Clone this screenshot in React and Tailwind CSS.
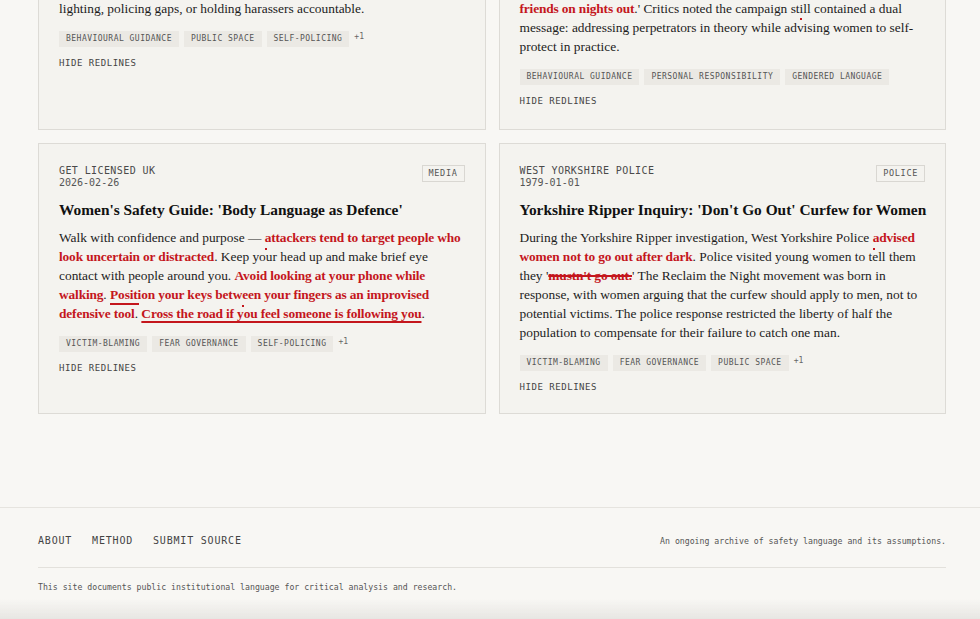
import React from "react";

const R = ({ children, className = "" }) => (
  <span className={`font-bold tracking-[-0.15px] text-[#c4161c] ${className}`}>{children}</span>
);

const Mark = ({ top = "top-[6px]" }) => (
  <span className="relative inline-block w-0 h-0">
    <span className={`absolute left-0 ${top} w-[2px] h-[2px] bg-[#c4161c]`} />
  </span>
);

const Tag = ({ children }) => (
  <span className="flex h-4 items-center bg-[#ebe9e4] px-[7px] text-[8px] tracking-[0.06em] text-[#555] uppercase">
    {children}
  </span>
);

const Tags = ({ items, more }) => (
  <div className="mt-[13px] flex items-start gap-[5px] font-['DejaVu_Sans_Mono',monospace]">
    {items.map((t) => (
      <Tag key={t}>{t}</Tag>
    ))}
    {more && <span className="text-[8px] leading-[12px] text-[#666]">{more}</span>}
  </div>
);

const Hide = () => (
  <button className="mt-[10px] block text-left font-['DejaVu_Sans_Mono',monospace] text-[9px] leading-[12px] tracking-[0.06em] text-[#444]">
    HIDE REDLINES
  </button>
);

const Body = ({ children }) => (
  <p className="whitespace-nowrap font-['Liberation_Serif',serif] text-[13.4px] leading-[19px] text-[#1c1c1c]">
    {children}
  </p>
);

const Card = ({ source, date, badge, title, children, tags, more }) => (
  <article className="flex flex-col border border-[#dddbd6] bg-[#f4f3ef] px-5 pb-5 pt-[21px]">
    <div className="flex items-start justify-between">
      <div className="font-['DejaVu_Sans_Mono',monospace] text-[10px] leading-[12px]">
        <div className="tracking-[0.04em] text-[#4a4a4a]">{source}</div>
        <div className="text-[#555]">{date}</div>
      </div>
      <span className="flex h-[17px] items-center border border-[#d9d7d2] px-[6px] font-['DejaVu_Sans_Mono',monospace] text-[8.5px] tracking-[0.08em] text-[#555]">
        {badge}
      </span>
    </div>
    <h2 className="mt-[11px] whitespace-nowrap font-['Liberation_Serif',serif] text-[15.4px] font-bold leading-[20px] text-[#111]">
      {title}
    </h2>
    <div className="mt-[8px]">
      <Body>{children}</Body>
    </div>
    <Tags items={tags} more={more} />
    <Hide />
  </article>
);

const TopCard = ({ children, tags, more }) => (
  <article className="flex flex-col border-x border-b border-[#dddbd6] bg-[#f4f3ef] px-5 pb-[22px]">
    <Body>{children}</Body>
    <Tags items={tags} more={more} />
    <Hide />
  </article>
);

export default function App() {
  return (
    <div className="relative min-h-[619px] bg-[#f8f7f4] text-[#1c1c1c]">
      <main className="pl-[38px] pr-[34px]">
        <div className="-mt-[1px] grid grid-cols-2 gap-x-[13px] gap-y-[13px]">
          <TopCard tags={["Behavioural guidance", "Public space", "Self-policing"]} more="+1">
            lighting, policing gaps, or holding harassers accountable.
          </TopCard>
          <TopCard tags={["Behavioural guidance", "Personal responsibility", "Gendered language"]}>
            <R>friends on nights out</R>.' Critics noted the campaign st
            <Mark top="top-[5px]" />
            ill contained a dual
            <br />
            message: addressing perpetrators in theory while advising women to self-
            <br />
            protect in practice.
          </TopCard>

          <Card
            source="GET LICENSED UK"
            date="2026-02-26"
            badge="MEDIA"
            title="Women's Safety Guide: 'Body Language as Defence'"
            tags={["Victim-blaming", "Fear governance", "Self-policing"]}
            more="+1"
          >
            Walk with confidence and purpose — <Mark />
            <R>attackers tend to target people who</R>
            <br />
            <R>look uncertain or distracted</R>. Keep your head up and make brief eye
            <br />
            contact with people around you. <R>Avoid looking at your phone while</R>
            <br />
            <R>walking</R>.{" "}
            <R>
              <span className="relative">
                Position
                <span className="absolute left-0 top-[16px] h-[2px] w-[29px] bg-[#c4161c]" />
              </span>{" "}
              your keys betw
              <Mark />
              een your fingers as an improvised
            </R>
            <br />
            <R>defensive tool</R>.{" "}
            <R className="underline decoration-2 underline-offset-[3px]">
              Cross the road if you feel someone is following you
            </R>
            .
          </Card>

          <Card
            source="WEST YORKSHIRE POLICE"
            date="1979-01-01"
            badge="POLICE"
            title="Yorkshire Ripper Inquiry: 'Don't Go Out' Curfew for Women"
            tags={["Victim-blaming", "Fear governance", "Public space"]}
            more="+1"
          >
            During the Yorkshire Ripper investigation, West Yorkshire Police <Mark />
            <R>advised</R>
            <br />
            <R>women not to go out after dark</R>. Police visited young women to tell them
            <br />
            they '<R className="line-through decoration-[1.5px]">mustn't go out.</R>' The Reclaim the
            Night movement was born in
            <br />
            response, with women arguing that the curfew should apply to men, not to
            <br />
            potential victims. The police response restricted the liberty of half the
            <br />
            population to compensate for their failure to catch one man.
          </Card>
        </div>
      </main>

      <footer className="mt-[93px] border-t border-[#e6e4df]">
        <div className="pl-[38px] pr-[34px] font-['DejaVu_Sans_Mono',monospace]">
          <div className="flex items-center justify-between pb-[20px] pt-[27px]">
            <nav className="flex gap-[20px] text-[10px] leading-[12px] tracking-[0.08em] text-[#444]">
              <a>ABOUT</a>
              <a>METHOD</a>
              <a>SUBMIT SOURCE</a>
            </nav>
            <p className="text-[8.2px] leading-[10px] text-[#555]">
              An ongoing archive of safety language and its assumptions.
            </p>
          </div>
          <div className="border-t border-[#e3e1dc] pb-[27px] pt-[14px] text-[8.2px] leading-[10px] text-[#555]">
            This site documents public institutional language for critical analysis and research.
          </div>
        </div>
      </footer>

      <div className="pointer-events-none fixed inset-x-0 bottom-0 h-[20px] bg-gradient-to-b from-transparent to-[#e7e6e2]" />
    </div>
  );
}
